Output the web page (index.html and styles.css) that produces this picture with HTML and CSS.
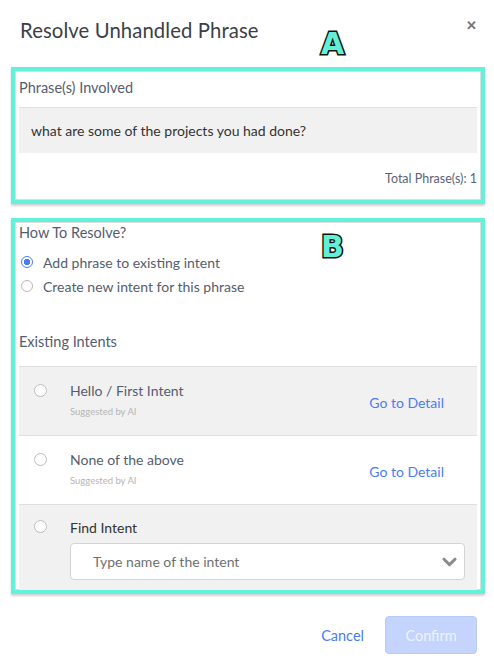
FILE: index.html
```html
<!DOCTYPE html>
<html>
<head>
<meta charset="utf-8">
<link rel="stylesheet" href="styles.css">
</head>
<body>
<div class="modal">
  <div class="header">
    <h1 class="title">Resolve Unhandled Phrase</h1>
    <span class="close">&#x2715;</span>
    <span class="tag tag-a">A</span>
  </div>

  <section class="box box-a">
    <div class="label">Phrase(s) Involved</div>
    <div class="phrase">what are some of the projects you had done?</div>
    <div class="total">Total Phrase(s): 1</div>
  </section>

  <section class="box box-b">
    <span class="tag tag-b">B</span>
    <div class="label label-b">How To Resolve?</div>
    <label class="opt"><span class="radio checked"></span>Add phrase to existing intent</label>
    <label class="opt"><span class="radio"></span>Create new intent for this phrase</label>
    <div class="label label-ex">Existing Intents</div>
    <div class="list">
      <div class="row gray">
        <span class="radio big"></span>
        <div class="row-main">
          <div class="row-title">Hello / First Intent</div>
          <div class="row-sub">Suggested by AI</div>
        </div>
        <a class="link">Go to Detail</a>
      </div>
      <div class="row">
        <span class="radio big"></span>
        <div class="row-main">
          <div class="row-title">None of the above</div>
          <div class="row-sub">Suggested by AI</div>
        </div>
        <a class="link">Go to Detail</a>
      </div>
      <div class="row gray find">
        <span class="radio big"></span>
        <div class="row-main">
          <div class="row-title dark">Find Intent</div>
          <div class="select">
            <span class="placeholder">Type name of the intent</span>
            <svg class="chev" width="15" height="10" viewBox="0 0 15 10"><path d="M2 2.2 L7.5 7.6 L13 2.2" fill="none" stroke="#8a8a8a" stroke-width="3" stroke-linecap="round" stroke-linejoin="round"/></svg>
          </div>
        </div>
      </div>
    </div>
  </section>

  <div class="footer">
    <a class="cancel">Cancel</a>
    <button class="confirm">Confirm</button>
  </div>
</div>
</body>
</html>
```

FILE: styles.css
```css
* { box-sizing: border-box; }
html, body { margin: 0; padding: 0; background: #fff; }
body {
  font-family: Lato, "Open Sans", Arial, sans-serif;
  color: #333;
  width: 494px;
  height: 666px;
  overflow: hidden;
}
.modal { position: relative; }
.header {
  position: relative;
  height: 67px;
  padding: 17px 20px 0 20px;
}
.title {
  margin: 0;
  font-size: 20.3px;
  font-weight: 400;
  line-height: 26px;
  color: #3a3f48;
  letter-spacing: 0.1px;
}
.close {
  position: absolute;
  right: 17px;
  top: 17px;
  font-size: 13px;
  font-weight: 700;
  color: #777;
}
.tag {
  position: absolute;
  font-family: "DejaVu Sans", Arial, sans-serif;
  font-weight: 900;
  font-size: 30px;
  line-height: 30px;
  color: #5ff0d6;
  -webkit-text-stroke: 3px #111;
  paint-order: stroke fill;
}
.tag-a { left: 321px; top: 29px; }
.tag-b { left: 306px; top: 10px; }

.box {
  position: relative;
  margin-left: 11px;
  width: 474px;
  border: 4px solid #63f1d9;
  padding: 0 4px;
  box-shadow: inset 0 0 0 1px #dcdcdc, 0 2px 2px rgba(0,0,0,0.18);
}
.label {
  font-size: 14.5px;
  line-height: 20px;
  color: #545d70;
}
.box-a .label { padding-top: 7px; }
.phrase {
  margin-top: 9px;
  height: 46px;
  line-height: 45px;
  background: #f1f1f1;
  border-top: 1px solid #e0e0e0;
  padding: 0 12px;
  font-size: 14px;
  color: #333;
}
.total {
  margin-top: 17px;
  text-align: right;
  font-size: 12.5px;
  line-height: 18px;
  color: #5a6376;
  padding-bottom: 12px;
}

.box-b { margin-top: 14px; }
.label-b { padding-top: 1px; }
.opt {
  display: flex;
  align-items: center;
  height: 24px;
  font-size: 14px;
  color: #545d70;
}
.label-b + .opt { margin-top: 7px; }
.opt .radio { margin: 0 10px 0 2px; }
.radio {
  display: inline-block;
  flex: none;
  width: 12px;
  height: 12px;
  border-radius: 50%;
  border: 1px solid #b8b8b8;
  background: #fff;
}
.radio.checked {
  border-color: #4a7cf6;
  background: radial-gradient(circle, #4a7cf6 0 3px, #fff 3.5px);
}
.label-ex { margin-top: 34px; }
.list { margin-top: 14px; }
.row {
  display: flex;
  align-items: flex-start;
  height: 69px;
  border-top: 1px solid #dedede;
  padding: 0 33px 0 15px;
  position: relative;
}
.row.gray { background: #f1f1f1; }
.radio.big {
  width: 13px;
  height: 13px;
  margin-top: 17px;
  border-color: #bdbdbd;
}
.row-main { flex: 1; margin-left: 23px; }
.row-title {
  padding-top: 14px;
  font-size: 14px;
  line-height: 20px;
  color: #545d70;
}
.row-title.dark { color: #333; }
.row-sub {
  margin-top: 4px;
  font-size: 9.5px;
  line-height: 14px;
  color: #b5b5b5;
}
.link {
  align-self: center;
  font-size: 14px;
  color: #4a7cf6;
  margin-top: 2px;
}
.row.find { height: 86px; padding-right: 12px; }
.row.find .radio.big { margin-top: 15px; }
.row.find .row-title { padding-top: 13px; }
.select {
  margin-top: 5px;
  height: 37px;
  border: 1px solid #d4d4d4;
  border-radius: 4px;
  background: #fff;
  display: flex;
  align-items: center;
  padding: 0 7px 0 22px;
}
.placeholder {
  flex: 1;
  font-size: 14px;
  color: #707070;
}
.chev { flex: none; }

.footer {
  display: flex;
  justify-content: flex-end;
  align-items: center;
  gap: 21px;
  margin-top: 22px;
  padding-right: 17px;
}
.cancel {
  font-size: 14.5px;
  color: #4a7cf6;
}
.confirm {
  width: 92px;
  height: 38px;
  border: 1px solid #b8cafa;
  border-radius: 4px;
  background: #c4d4fd;
  color: #eef2ff;
  font-family: inherit;
  font-size: 14.5px;
  padding: 0;
}
```
